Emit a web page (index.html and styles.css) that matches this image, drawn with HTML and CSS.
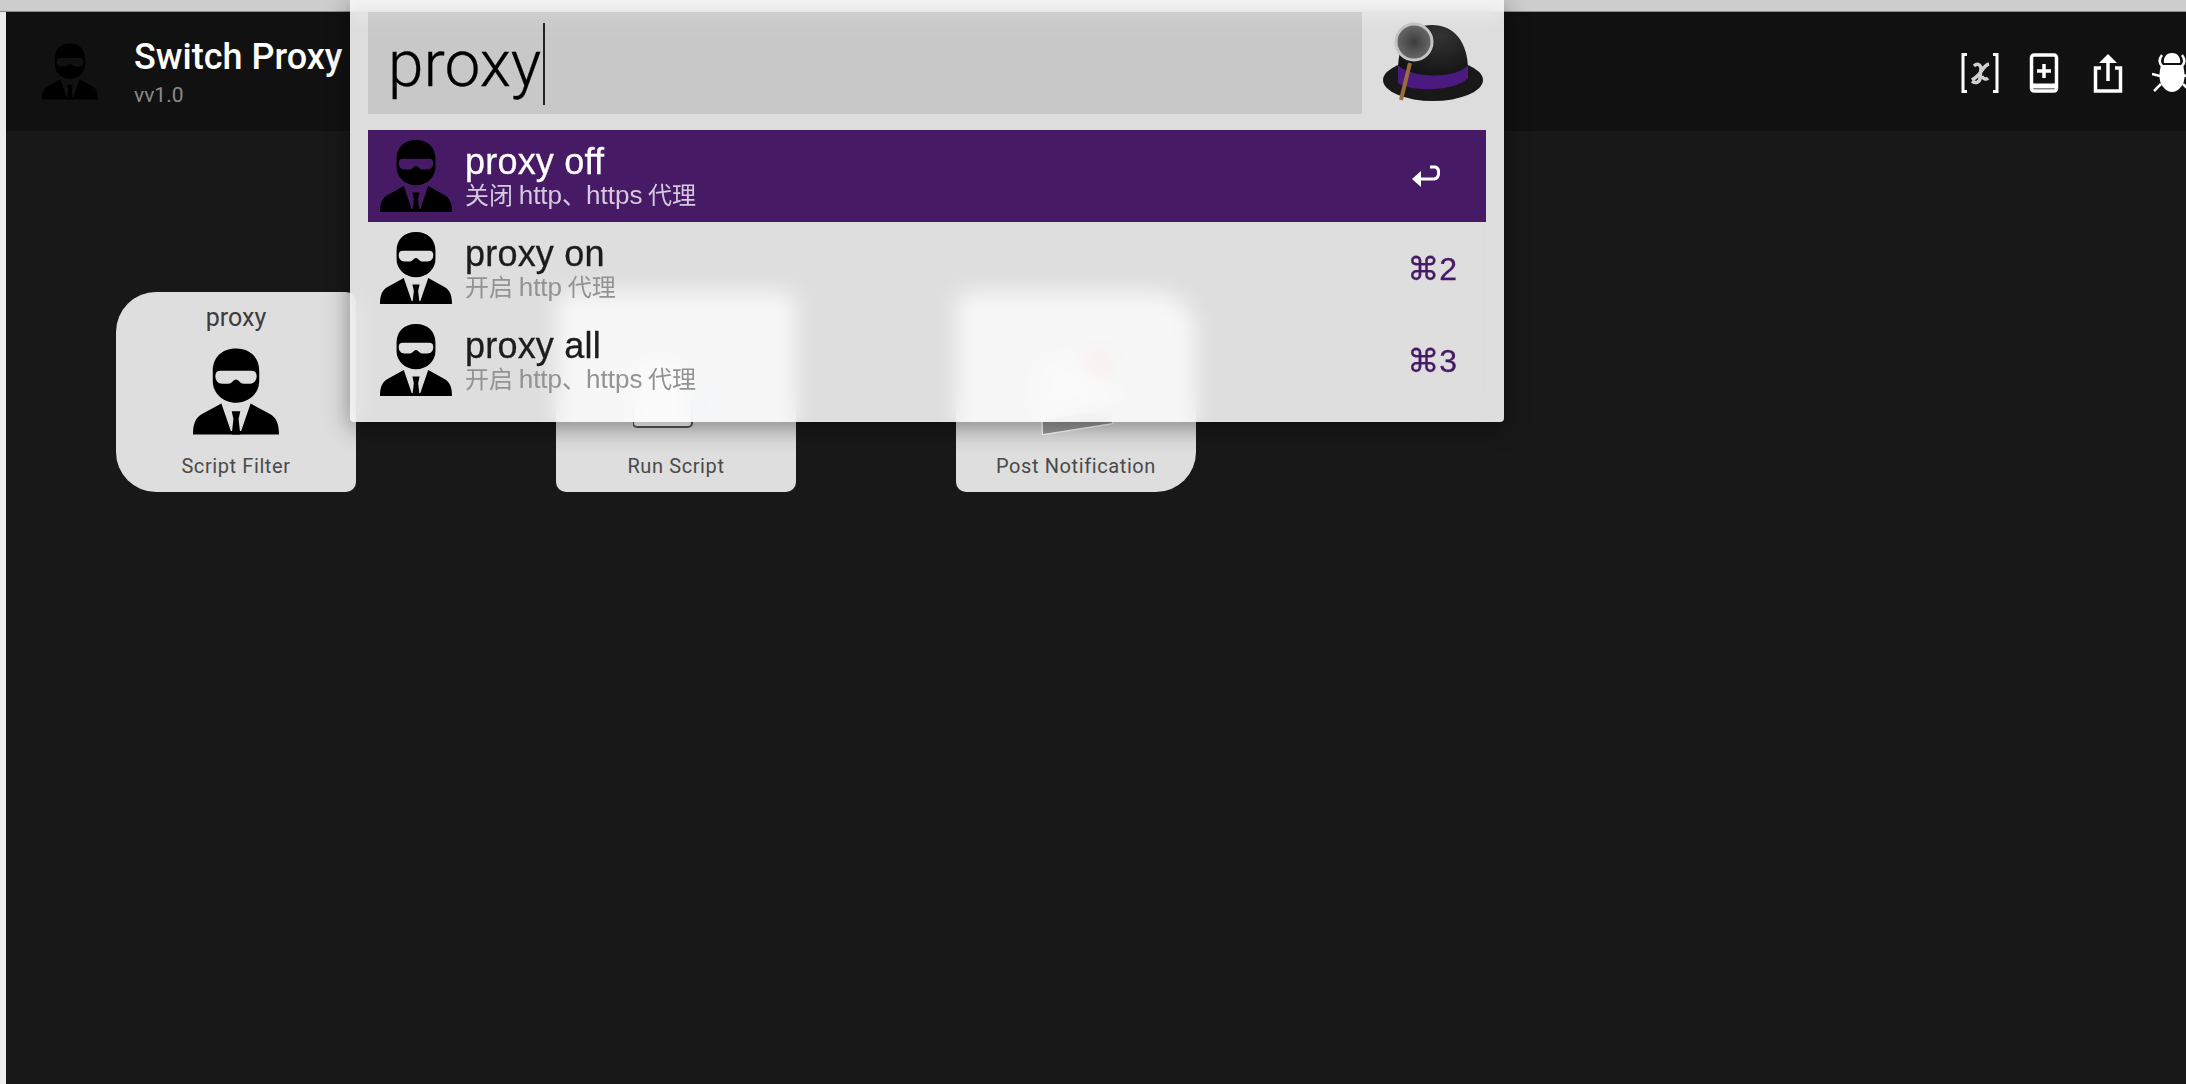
FILE: index.html
```html
<!DOCTYPE html>
<html lang="en">
<head>
  <meta charset="UTF-8">
  <title>Switch Proxy</title>
  <link rel="stylesheet" href="styles.css">
</head>
<body>
  <svg class="defs" width="0" height="0">
    <defs>
      <symbol id="agent" viewBox="0 0 100 100">
        <path fill-rule="evenodd" d="M50 0C67 0 77 11 77 26V38C77 52 65 63 50 63C35 63 23 52 23 38V26C23 11 33 0 50 0ZM32 26C28 26 26 28 26 32C26 37 29 41 34 41H41C45 41 47 36 50 36C53 36 55 41 59 41H66C71 41 74 37 74 32C74 28 72 26 68 26Z"/>
        <path d="M0 100C0 88 3 80 11 76L33 64L44 96H56L67 64L89 76C97 80 100 88 100 100Z"/>
        <path d="M45 73H55L53 82L55 100H45L47 82Z"/>
      </symbol>
    </defs>
  </svg>

  <div class="page">
    <div class="topbar"></div>
    <div class="main">
      <div class="strip"></div>
      <div class="app">
        <header class="header">
          <div class="brand">
            <svg class="brand-icon"><use href="#agent"/></svg>
            <div>
              <div class="brand-name">Switch Proxy</div>
              <div class="brand-version">vv1.0</div>
            </div>
          </div>
          <div class="tools">
            <svg class="tool" viewBox="0 0 40 40" fill="none" stroke="#fff" stroke-width="3">
              <path d="M7 1.5H3V38.500H7"/>
              <path d="M33 1.500H37V38.500H33"/>
              <path d="M14 13C17 10 20 11 21 15L20 25C20 29 16 31 12 28M29 11C25 12 23 16 20 20C18 23 15 25 12 27M28 25C26 27 23 26 22 23" stroke="#d0d0d0" stroke-width="3.500"/>
            </svg>
            <svg class="tool" viewBox="0 0 40 40" fill="none" stroke="#fff" stroke-width="3.500">
              <rect x="7.500" y="2" width="25" height="36" rx="2.500"/>
              <path d="M6 33H34" stroke-width="5"/>
              <path d="M20 11V25M13 18H27"/>
            </svg>
            <svg class="tool" viewBox="0 0 40 40" fill="none" stroke="#fff" stroke-width="3.500">
              <path d="M13 15H7.500V38H32.500V15H27"/>
              <path d="M20 28V4"/>
              <path d="M11 10L20 1L29 10Z" fill="#fff" stroke="none"/>
            </svg>
            <svg class="tool" viewBox="0 0 40 40" fill="#fff">
              <path d="M20 0C26 0 29 5 28 10H12C11 5 14 0 20 0Z"/>
              <path d="M9 12H31C33 20 33 26 31 31C28 36 24 39 20 39C16 39 12 36 9 31C7 26 7 20 9 12Z"/>
              <path d="M10 2C7 6 7 10 10 13M30 2C33 6 33 10 30 13M0 21L8 23M40 21L32 23M2 38L9 31M38 38L31 31" fill="none" stroke="#fff" stroke-width="2.500"/>
            </svg>
          </div>
        </header>

        <div class="canvas">
          <div class="node node-filter">
            <div class="node-title">proxy</div>
            <svg class="node-icon"><use href="#agent"/></svg>
            <div class="node-label">Script Filter</div>
          </div>
          <div class="node node-script">
            <svg class="node-icon" viewBox="0 0 86 87">
              <rect x="0" y="8" width="59" height="71" rx="4" fill="#fff" stroke="#555" stroke-width="2"/>
              <circle cx="72" cy="52" r="10" fill="#a8d8f0"/>
            </svg>
            <div class="node-label">Run Script</div>
          </div>
          <div class="node node-notify">
            <svg class="node-icon" viewBox="0 0 86 87">
              <path d="M9 20L76 8L79 75L10 86Z" fill="#f4f4f4" stroke="#fff" stroke-width="3" stroke-linejoin="round"/>
              <path d="M10 72L79 62V75L10 86Z" fill="#999"/>
              <circle cx="67" cy="16" r="10" fill="#ee5544"/>
            </svg>
            <div class="node-label">Post Notification</div>
          </div>
        </div>
      </div>
    </div>

    <div class="alfred">
      <div class="search">
        <div class="query">proxy<span class="caret"></span></div>
        <svg class="hat" viewBox="0 0 120 100">
          <defs>
            <radialGradient id="dome" cx="0.6" cy="0.2" r="0.8">
              <stop offset="0" stop-color="#333"/>
              <stop offset="1" stop-color="#111"/>
            </radialGradient>
            <radialGradient id="lens" cx="0.5" cy="0.5" r="0.5">
              <stop offset="0" stop-color="#3c3c3c"/>
              <stop offset="1" stop-color="#6a6a6a"/>
            </radialGradient>
          </defs>
          <ellipse cx="63" cy="68" rx="50" ry="21" fill="#181818"/>
          <path d="M28 58C28 30 40 13 62 13C84 13 98 30 98 58C98 72 28 72 28 58Z" fill="url(#dome)"/>
          <path d="M28 53C40 66 85 68 98 53V66C85 80 40 80 28 71Z" fill="#4b1a80"/>
          <path d="M40 51L31 88" stroke="#9a6c3c" stroke-width="4"/>
          <circle cx="44" cy="30" r="18" fill="url(#lens)" stroke="#c4c4c4" stroke-width="3"/>
        </svg>
      </div>
      <div class="result selected">
        <svg class="result-icon"><use href="#agent"/></svg>
        <div class="result-text">
          <div class="result-title">proxy off</div>
          <div class="result-sub">关闭 <span class="latin">http</span>、<span class="latin">https</span> 代理</div>
        </div>
        <svg class="return-key" viewBox="0 0 28 22" fill="none" stroke="#fff" stroke-width="3">
          <path d="M18 2H23C28 3 28 13 22 14H6"/>
          <path d="M9 6L0 14L9 22Z" fill="#fff" stroke="none"/>
        </svg>
      </div>
      <div class="result">
        <svg class="result-icon"><use href="#agent"/></svg>
        <div class="result-text">
          <div class="result-title">proxy on</div>
          <div class="result-sub">开启 <span class="latin">http</span> 代理</div>
        </div>
        <div class="shortcut">⌘2</div>
      </div>
      <div class="result">
        <svg class="result-icon"><use href="#agent"/></svg>
        <div class="result-text">
          <div class="result-title">proxy all</div>
          <div class="result-sub">开启 <span class="latin">http</span>、<span class="latin">https</span> 代理</div>
        </div>
        <div class="shortcut">⌘3</div>
      </div>
    </div>
  </div>
</body>
</html>
```

FILE: styles.css
```css
html, body {
  margin: 0;
  height: 100%;
  overflow: hidden;
  background: #181818;
}
.defs { position: absolute; }
.page {
  position: relative;
  display: flex;
  flex-direction: column;
  height: 1084px;
  overflow: hidden;
  font-family: "Liberation Sans", "Noto Sans CJK SC", sans-serif;
  filter: blur(0.6px);
}
.topbar {
  height: 11px;
  flex: none;
  background: #cdcdcd;
  border-bottom: 1px solid #8a8a8a;
}
.main { display: flex; flex: 1; }
.strip { width: 6px; flex: none; background: #ededed; }
.app { flex: 1; display: flex; flex-direction: column; background: #181818; }

.header {
  display: flex;
  justify-content: space-between;
  align-items: center;
  height: 119px;
  padding-left: 36px;
  background: #111;
}
.brand { display: flex; align-items: center; gap: 36px; }
.brand-icon { width: 56px; height: 57px; fill: #000; }
.brand-name {
  color: #fff;
  font-family: Roboto, sans-serif;
  font-size: 36px;
  font-weight: 500;
  line-height: 40px;
}
.brand-version {
  margin-top: 6px;
  color: #8a8a8a;
  font-family: Roboto, sans-serif;
  font-size: 21px;
  line-height: 24px;
}
.tools { display: flex; gap: 24px; margin-right: -6px; padding-top: 3px; }
.tool { width: 40px; height: 40px; }

.canvas { display: flex; padding: 161px 0 0 110px; }
.node {
  display: flex;
  flex-direction: column;
  align-items: center;
  width: 240px;
  height: 200px;
  padding-top: 56px;
  box-sizing: border-box;
  background: #dedede;
  border-radius: 10px;
}
.node-filter { padding-top: 11px; border-radius: 40px 10px 10px 40px; }
.node-script { margin-left: 200px; }
.node-notify { margin-left: 160px; border-radius: 10px 40px 40px 10px; }
.node-title {
  height: 45px;
  color: #3c3c3c;
  font-family: Roboto, sans-serif;
  font-size: 25px;
  line-height: 30px;
}
.node-icon { width: 86px; height: 87px; flex: none; fill: #000; }
.node-label {
  margin-top: 17px;
  color: #4a4a4a;
  font-family: Roboto, sans-serif;
  font-size: 20px;
  line-height: 28px;
  letter-spacing: 0.6px;
}

/* launcher window lies over the canvas */
.alfred {
  position: absolute;
  left: 350px;
  top: 0;
  width: 1154px;
  height: 422px;
  padding: 12px 18px;
  box-sizing: border-box;
  background: rgba(250, 250, 250, 0.874);
  backdrop-filter: blur(11px);
  box-shadow: 0 6px 24px rgba(0, 0, 0, 0.4);
  border-radius: 0 0 4px 4px;
}
.search { display: flex; height: 102px; margin-bottom: 16px; }
.query {
  display: flex;
  align-items: center;
  width: 994px;
  flex: none;
  padding: 2px 0 0 20px;
  box-sizing: border-box;
  background: rgba(120, 120, 120, 0.2);
  color: #000;
  font-family: Roboto, sans-serif;
  font-size: 64px;
  font-weight: 300;
  -webkit-text-stroke: 0.3px #000;
}
.caret { width: 2px; height: 82px; margin-left: 2px; background: #222; }
.hat { width: 120px; height: 100px; margin-left: 8px; flex: none; }

.result {
  display: flex;
  align-items: center;
  width: 1118px;
  height: 92px;
  padding: 0 29px 0 12px;
  box-sizing: border-box;
  color: #1c1c1c;
}
.result.selected { background: #471a66; color: #fff; }
.result-icon { width: 72px; height: 72px; flex: none; fill: #000; }
.result-text { flex: 1; margin-left: 13px; }
.result-title {
  font-size: 36px;
  line-height: 38px;
  letter-spacing: 0.2px;
  -webkit-text-stroke: 0.3px currentColor;
}
.result-sub {
  margin-top: 1px;
  font-size: 24px;
  line-height: 26px;
  word-spacing: -1px;
  color: #939393;
}
.result-sub .latin { font-size: 26px; }
.selected .result-sub { color: #d6c9de; }
.shortcut {
  padding-top: 2px;
  color: #471a66;
  font-family: "Liberation Sans", "DejaVu Sans", sans-serif;
  font-size: 32px;
  -webkit-text-stroke: 0.3px #471a66;
}
.return-key { width: 28px; height: 22px; margin-right: 17px; }
```
